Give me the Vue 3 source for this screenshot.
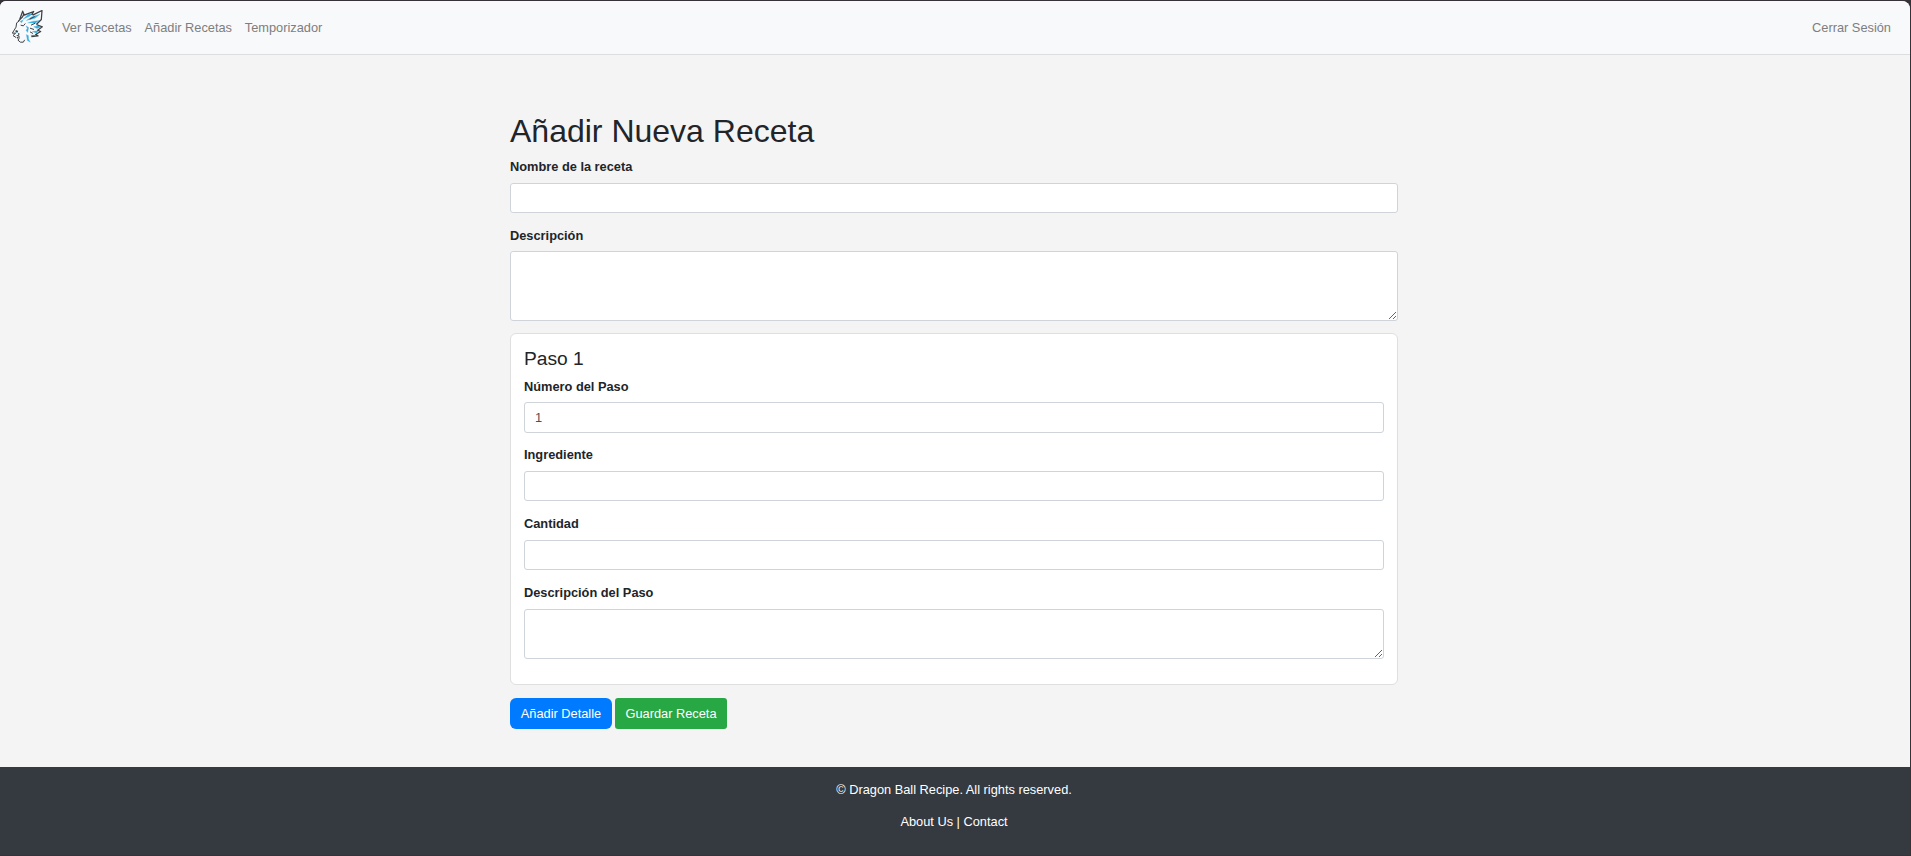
<script setup>
import { ref } from 'vue'

const links = ['Ver Recetas', 'Añadir Recetas', 'Temporizador']
const name = ref('')
const description = ref('')
const step = ref({ number: '1', ingredient: '', quantity: '', description: '' })
</script>

<template>
  <div class="window">
    <div class="page">
      <nav class="navbar">
        <a class="brand">
          <svg width="32" height="34" viewBox="13 14.500 96 102" fill="none" stroke-linejoin="round">
            <g fill="#36aee2" stroke="#5bbce4" stroke-width="1">
              <path d="M46 42 62 27 76 24 66 33zM56 46 72 35 97 27 82 39zM60 53 76 48 96 46 82 54zM78 65 92 62 98 66 88 70zM74 79 94 76 86 84zM69 90 84 90 78 95zM55 62 63 67 60 82 55 75 59 70zM56 88 62 91 63 102 68 111 59 106zM23 79 31 76 27 83zM37 49 47 44 42 53z"/>
            </g>
            <g stroke="#3d4247" stroke-width="3.800">
              <path d="M36 43 45 18 50 30 59 26 78 19 72 29M75 30 103 16 101 43 86 58M86 58 104 65 90 75 99 79 84 88 91 92 71 94M48 28 44 36 32 48"/>
              <path d="M35 47 27 53 25 66 14 84 24 84 16 91 25 97M27 91 34 92 34 100 31 105 38 111 47 111 51 104M39 60 47 62 53 55M66 42 81 34M70 60 83 54M67 69 79 73M67 80 76 85" stroke-width="3"/>
              <path d="M24 76 30 81M31 87 35 86M28 99 31 96" stroke-width="4.500"/>
            </g>
          </svg>
        </a>
        <a v-for="link in links" :key="link" class="nav-link">{{ link }}</a>
        <a class="nav-link logout">Cerrar Sesión</a>
      </nav>

      <main class="content">
        <h1>Añadir Nueva Receta</h1>
        <label for="name">Nombre de la receta</label>
        <input id="name" v-model="name" class="control" type="text">
        <label for="description" class="spaced">Descripción</label>
        <textarea id="description" v-model="description" class="control large"></textarea>

        <section class="card">
          <h5>Paso 1</h5>
          <label for="number" class="first">Número del Paso</label>
          <input id="number" v-model="step.number" class="control number" type="text">
          <label for="ingredient" class="spaced tight">Ingrediente</label>
          <input id="ingredient" v-model="step.ingredient" class="control" type="text">
          <label for="quantity" class="spaced roomy">Cantidad</label>
          <input id="quantity" v-model="step.quantity" class="control" type="text">
          <label for="detail" class="spaced roomy">Descripción del Paso</label>
          <textarea id="detail" v-model="step.description" class="control small"></textarea>
        </section>

        <div class="actions">
          <button class="btn add">Añadir Detalle</button>
          <button class="btn save">Guardar Receta</button>
        </div>
      </main>

      <footer class="footer">
        <p>© Dragon Ball Recipe. All rights reserved.</p>
        <p><a>About Us</a> | <a>Contact</a></p>
      </footer>
    </div>
  </div>
</template>

<style>
body {
  margin: 0;
  overflow: hidden;
}
</style>

<style scoped>
.window {
  box-sizing: border-box;
  height: 856px;
  padding: 1px 1px 1px 0;
  background: #353338;
  font-family: "Liberation Sans", Arial, sans-serif;
  font-size: 12.8px;
  line-height: 19px;
  color: #212529;
}
.window * {
  box-sizing: border-box;
}
.page {
  display: flex;
  flex-direction: column;
  height: 854px;
  overflow: hidden;
  border-radius: 6px 8px 0 0;
  background: #f4f4f4;
}
.navbar {
  display: flex;
  align-items: center;
  flex: none;
  height: 54px;
  padding: 0 19px 0 12px;
  border-bottom: 1px solid #dcdddf;
  background: #f8f9fa;
}
.brand {
  display: flex;
  width: 50px;
  margin-top: -2px;
}
.nav-link {
  margin-right: 12.8px;
  color: #7d7e7f;
  white-space: nowrap;
}
.logout {
  margin: 0 0 0 auto;
}
.content {
  flex: none;
  width: 888px;
  height: 712px;
  margin-left: 510px;
  padding-top: 57px;
}
h1 {
  margin: 0 0 7px;
  font-size: 32px;
  font-weight: 400;
  line-height: 38px;
}
label {
  display: block;
  height: 19px;
  margin-bottom: 7px;
  font-weight: 700;
}
.first {
  margin-bottom: 6px;
}
.spaced {
  margin-top: 13px;
  margin-bottom: 6px;
}
.tight {
  margin-top: 12px;
  margin-bottom: 7px;
}
.roomy {
  margin-bottom: 7px;
}
.control {
  display: block;
  width: 100%;
  height: 30px;
  margin: 0;
  padding: 5px 10px;
  border: 1px solid #ced4da;
  border-radius: 3px;
  outline: none;
  background: #fff;
  color: #495057;
  font: inherit;
}
.number {
  height: 31px;
}
.large {
  height: 70px;
}
.small {
  height: 50px;
}
.card {
  height: 352px;
  margin-top: 12px;
  padding: 13px 13px 0;
  border: 1px solid #dfdfdf;
  border-radius: 6px;
  background: #fff;
}
h5 {
  height: 23px;
  margin: 0 0 7px;
  font-size: 19.2px;
  font-weight: 400;
  line-height: 23px;
}
.actions {
  display: flex;
  gap: 3px;
  margin-top: 13px;
}
.btn {
  height: 31px;
  padding: 0;
  border: 0;
  color: #fff;
  font: inherit;
}
.add {
  width: 102px;
  border-radius: 6px;
  background: #007bff;
}
.save {
  width: 112px;
  border-radius: 3px;
  background: #28a745;
}
.footer {
  flex: 1;
  padding: 13px 2px 0 0;
  background: #343a40;
  color: #fff;
  text-align: center;
}
.footer p {
  margin: 0 0 13px;
}
</style>
